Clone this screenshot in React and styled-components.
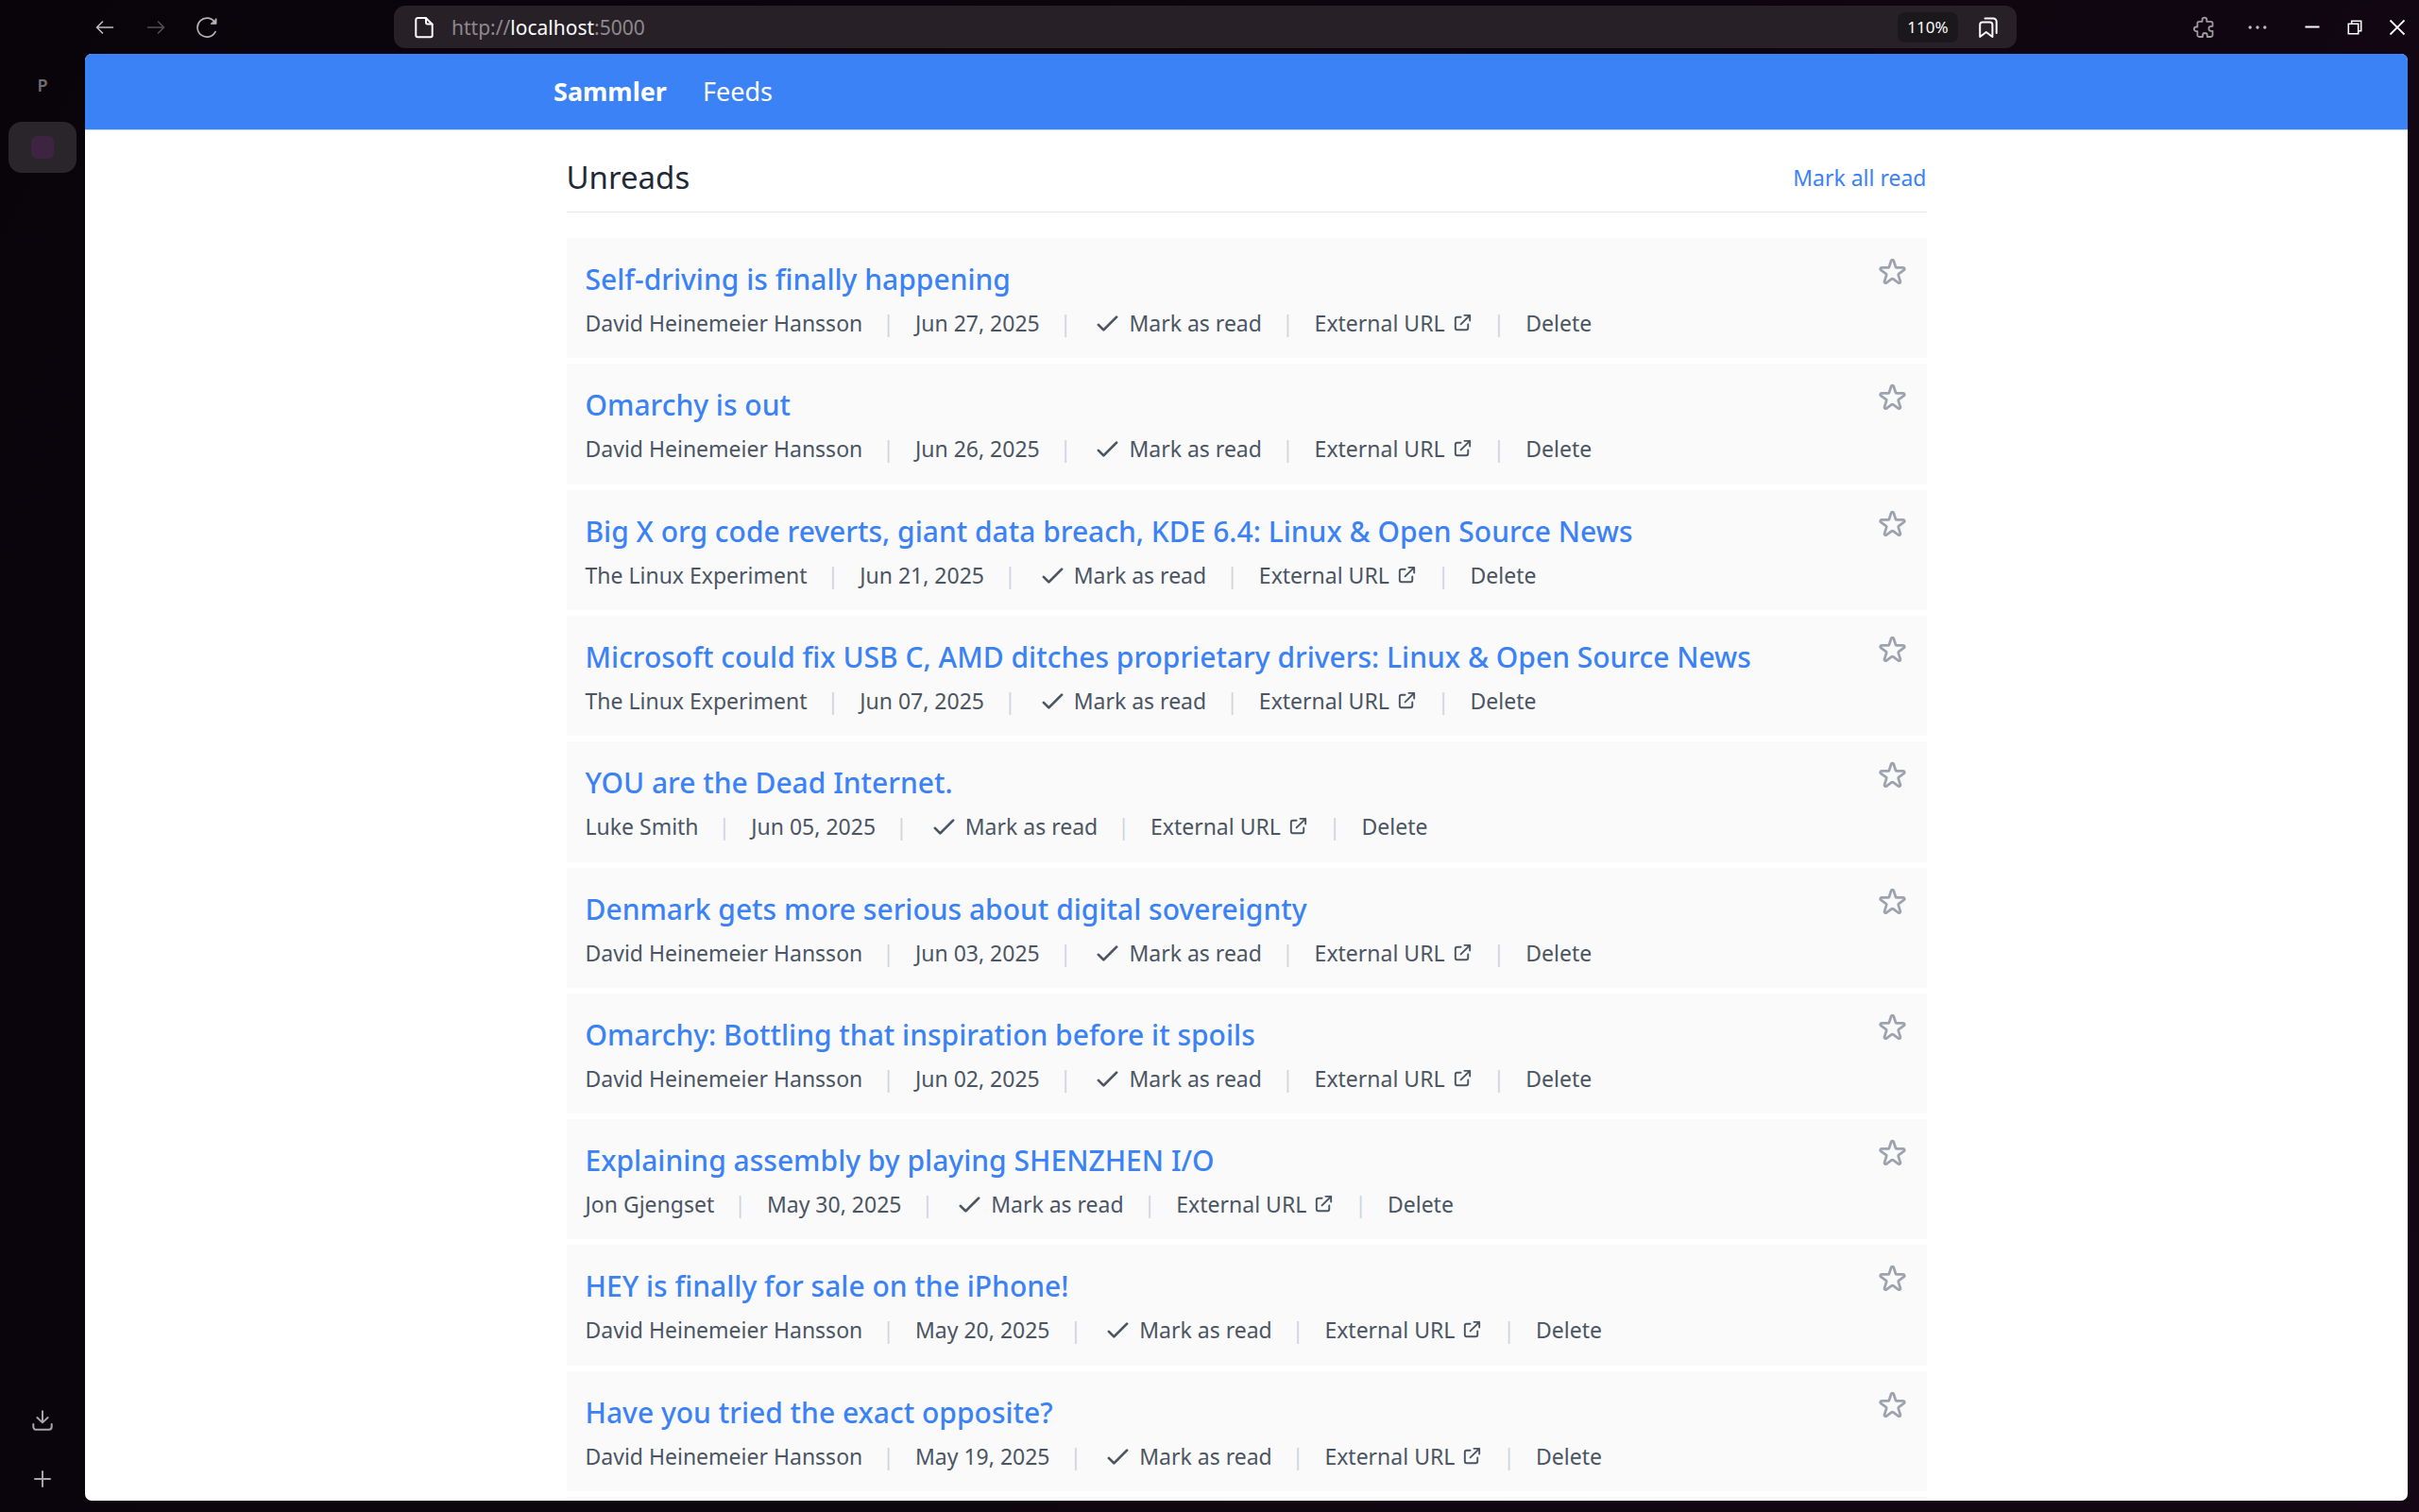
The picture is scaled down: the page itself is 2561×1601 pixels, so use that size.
import React from "react";
import styled, { createGlobalStyle } from "styled-components";

const GlobalStyle = createGlobalStyle`
  * { box-sizing: border-box; }
  body { margin: 0; background: #0c060d; font-family: "Noto Sans", sans-serif; }
  ul, h1, h2, p { margin: 0; padding: 0; list-style: none; font-weight: 400; }
  a { color: inherit; text-decoration: none; }
  button { background: none; border: 0; padding: 0; margin: 0; color: inherit; font: inherit; cursor: pointer; }
`;

const Window = styled.div`
  height: 100vh;
  display: grid;
  grid-template: 57px 1fr / 90px 1fr;
  overflow: hidden;
  background: linear-gradient(115deg, #08040a 0%, #0c060d 40%, #140614 100%);
`;

const Toolbar = styled.header`
  grid-column: 1 / -1;
  display: grid;
  grid-template-columns: 417px 1fr 426px;
  align-items: center;
  color: #fbfbfe;
`;

const IconButton = styled.button`
  display: flex;
  width: 24px;
  height: 24px;
  opacity: ${(p) => p.$opacity || 1};
  svg { width: 24px; height: 24px; }
`;

const NavButtons = styled.div`
  display: flex;
  gap: 30px;
  padding-left: 99px;
`;

const AddressBar = styled.div`
  display: flex;
  align-items: center;
  height: 45px;
  padding: 0 18px 0 20px;
  border-radius: 12px;
  background: #272127;
`;

const Address = styled.div`
  flex: 1;
  padding-left: 17px;
  font-size: 21px;
  line-height: 30px;
  color: #8d898d;
  b { font-weight: 400; color: #fbfbfe; }
`;

const ZoomLevel = styled.button`
  width: 64px;
  height: 32px;
  margin-right: 20px;
  border-radius: 8px;
  background: #1b181c;
  font-size: 17px;
`;

const WindowButtons = styled.div`
  display: flex;
  justify-content: flex-end;
  gap: 34px;
  padding-right: 11px;
`;

const ButtonGroup = styled.div`
  display: flex;
  gap: ${(p) => p.$gap}px;
`;

const Sidebar = styled.aside`
  display: flex;
  flex-direction: column;
  align-items: center;
  color: #fbfbfe;
`;

const Space = styled.div`
  height: 72px;
  padding-top: 21px;
  font-size: 18px;
  line-height: 24px;
  font-weight: 600;
  color: #716d71;
`;

const Tab = styled.button`
  width: 72px;
  height: 54px;
  display: grid;
  place-items: center;
  border-radius: 14px;
  background: #2a252b;
`;

const Favicon = styled.span`
  width: 24px;
  height: 24px;
  border-radius: 6px;
  background: #3d2440;
`;

const SideActions = styled.div`
  display: flex;
  flex-direction: column;
  gap: 38px;
  margin-top: auto;
  padding-bottom: 23px;
`;

const Viewport = styled.div`
  display: flex;
  flex-direction: column;
  min-height: 0;
  margin: 0 12px 12px 0;
  overflow: hidden;
  border-radius: 7px;
  background: #fff;
`;

const NavBar = styled.nav`
  flex: none;
  padding: 20px 0;
  border-bottom: 1px solid #bfdbfe;
  background: #3b82f6;
  color: #fff;
  font-size: 27px;
  line-height: 40px;
`;

const NavInner = styled.div`
  display: flex;
  gap: 38px;
  width: 100%;
  max-width: 1467px;
  margin: 0 auto;
`;

const Brand = styled.a`
  font-weight: 700;
`;

const Main = styled.main`
  flex: 1;
  display: flex;
  flex-direction: column;
  width: 100%;
  max-width: 1440px;
  min-height: 0;
  margin: 0 auto;
`;

const PageHead = styled.div`
  display: flex;
  align-items: center;
  justify-content: space-between;
  flex: none;
  padding: 25px 0 11px;
  margin-bottom: 27px;
  border-bottom: 1px solid #e5e7eb;
`;

const Heading = styled.h1`
  font-size: 33px;
  line-height: 50px;
  color: #1f2937;
`;

const MarkAll = styled.button`
  font-size: 23px;
  line-height: 33px;
  color: #3b82f6;
`;

const List = styled.ul`
  flex: 1;
  display: grid;
  grid-template-rows: repeat(10, 1fr) 4px;
  row-gap: 6px;
`;

const Row = styled.li`
  display: flex;
  justify-content: space-between;
  padding: 20px 20px 0;
  background: #fafafa;
  overflow: hidden;
`;

const NextRow = styled.li`
  background: #fafafa;
`;

const Title = styled.h2`
  font-size: 30px;
  line-height: 47px;
  font-weight: 500;
  color: #3b82f6;
`;

const Meta = styled.div`
  display: flex;
  align-items: center;
  margin-top: 7px;
  font-size: 23px;
  line-height: 33px;
  color: #4b5563;
`;

const Separator = styled.span`
  margin: 0 22px 0 21px;
  color: #d1d5db;
`;

const ReadButton = styled.button`
  display: flex;
  align-items: center;
  gap: 6px;
  svg { width: 33px; height: 33px; }
`;

const ExternalLink = styled.a`
  svg {
    width: 23px;
    height: 23px;
    margin-left: 7px;
    vertical-align: -2px;
  }
`;

const StarButton = styled.button`
  width: 33px;
  height: 33px;
  color: #9ca3af;
  svg { display: block; width: 33px; height: 33px; }
`;

const Icon = ({ children, width = 2, cap = "round" }) => (
  <svg viewBox="0 0 24 24" fill="none" stroke="currentColor" strokeWidth={width} strokeLinecap={cap} strokeLinejoin={cap === "round" ? "round" : "miter"} aria-hidden="true">
    {children}
  </svg>
);

const DHH = "David Heinemeier Hansson";
const entries = [
  ["Self-driving is finally happening", DHH, "Jun 27, 2025"],
  ["Omarchy is out", DHH, "Jun 26, 2025"],
  ["Big X org code reverts, giant data breach, KDE 6.4: Linux & Open Source News", "The Linux Experiment", "Jun 21, 2025"],
  ["Microsoft could fix USB C, AMD ditches proprietary drivers: Linux & Open Source News", "The Linux Experiment", "Jun 07, 2025"],
  ["YOU are the Dead Internet.", "Luke Smith", "Jun 05, 2025"],
  ["Denmark gets more serious about digital sovereignty", DHH, "Jun 03, 2025"],
  ["Omarchy: Bottling that inspiration before it spoils", DHH, "Jun 02, 2025"],
  ["Explaining assembly by playing SHENZHEN I/O", "Jon Gjengset", "May 30, 2025"],
  ["HEY is finally for sale on the iPhone!", DHH, "May 20, 2025"],
  ["Have you tried the exact opposite?", DHH, "May 19, 2025"],
];

function Entry({ title, feed, date }) {
  return (
    <Row>
      <div>
        <Title><a href="#entry">{title}</a></Title>
        <Meta>
          <a href="#feed">{feed}</a>
          <Separator>|</Separator>
          <span>{date}</span>
          <Separator>|</Separator>
          <ReadButton>
            <Icon><path d="M5 13l4 4L19 7" /></Icon>
            Mark as read
          </ReadButton>
          <Separator>|</Separator>
          <ExternalLink href="#external">
            External URL
            <Icon><path d="M10 6H6a2 2 0 0 0-2 2v10a2 2 0 0 0 2 2h10a2 2 0 0 0 2-2v-4M14 4h6m0 0v6m0-6L10 14" /></Icon>
          </ExternalLink>
          <Separator>|</Separator>
          <button>Delete</button>
        </Meta>
      </div>
      <StarButton aria-label="Star">
        <Icon><path d="M11.049 2.927c.3-.921 1.603-.921 1.902 0l1.519 4.674a1 1 0 0 0 .95.69h4.915c.969 0 1.371 1.24.588 1.81l-3.976 2.888a1 1 0 0 0-.363 1.118l1.518 4.674c.3.922-.755 1.688-1.538 1.118l-3.976-2.888a1 1 0 0 0-1.176 0l-3.976 2.888c-.783.57-1.838-.197-1.538-1.118l1.518-4.674a1 1 0 0 0-.363-1.118l-3.976-2.888c-.784-.57-.38-1.81.588-1.81h4.914a1 1 0 0 0 .951-.69l1.519-4.674z" /></Icon>
      </StarButton>
    </Row>
  );
}

export default function App() {
  return (
    <>
      <GlobalStyle />
      <Window>
        <Toolbar>
          <NavButtons>
            <IconButton aria-label="Back" $opacity={0.75}>
              <Icon width={1.6}><path d="M20.5 12H3.5M9.5 6l-6 6 6 6" /></Icon>
            </IconButton>
            <IconButton aria-label="Forward" $opacity={0.3}>
              <Icon width={1.6}><path d="M3.5 12h17M14.5 6l6 6-6 6" /></Icon>
            </IconButton>
            <IconButton aria-label="Reload" $opacity={0.7}>
              <Icon width={1.7}>
                <path d="M21 16.6A10 10 0 1 1 20.4 6.6" />
                <path d="M22 3v5.3h-5.5z" fill="currentColor" strokeWidth="1" />
              </Icon>
            </IconButton>
          </NavButtons>
          <AddressBar>
            <IconButton aria-label="Site information">
              <Icon>
                <path d="M5.5 2h8.3L20.7 8.8v11.7a1.7 1.7 0 0 1-1.7 1.7H5.2a1.9 1.9 0 0 1-1.9-1.9V4a2 2 0 0 1 2.2-2z" />
                <path d="M14 2.2v4.6a1.6 1.6 0 0 0 1.6 1.6h4.8" />
              </Icon>
            </IconButton>
            <Address role="textbox" aria-label="Address">http://<b>localhost</b>:5000</Address>
            <ZoomLevel>110%</ZoomLevel>
            <IconButton aria-label="Bookmarks">
              <Icon>
                <path d="M3.2 22V9a2.6 2.6 0 0 1 2.6-2.6h8A2.6 2.6 0 0 1 16.4 9v13l-6.6-5z" />
                <path d="M8.5 2.4h8.7a3.5 3.5 0 0 1 3.5 3.5v12" />
              </Icon>
            </IconButton>
          </AddressBar>
          <WindowButtons>
            <ButtonGroup $gap={33}>
              <IconButton aria-label="Extensions" $opacity={0.6}>
                <Icon width={1.8}><path d="M7.2 5.8h3.3V4a2.4 2.4 0 0 1 4.8 0v1.8h4.4a1.8 1.8 0 0 1 1.8 1.8v3.2h-1.6a2.5 2.5 0 0 0 0 5h1.6v4.4a1.8 1.8 0 0 1-1.8 1.8h-3.9v-1.6a2.4 2.4 0 0 0-4.8 0V22H7.2a1.8 1.8 0 0 1-1.8-1.8v-4.1H4.2a2.3 2.3 0 0 1 0-4.6h1.2V7.6a1.8 1.8 0 0 1 1.8-1.8z" /></Icon>
              </IconButton>
              <IconButton aria-label="Menu" $opacity={0.75}>
                <Icon width={3.4}><path d="M4.2 12h.01M12 12h.01M19.8 12h.01" /></Icon>
              </IconButton>
            </ButtonGroup>
            <ButtonGroup $gap={21}>
              <IconButton aria-label="Minimize"><Icon cap="butt"><path d="M4.5 11.5h15" /></Icon></IconButton>
              <IconButton aria-label="Restore">
                <Icon cap="butt" width={1.6}><path d="M5.3 8.3h10.4v10.4H5.3zM8.7 8V5.3h10V15.7H16" /></Icon>
              </IconButton>
              <IconButton aria-label="Close"><Icon cap="butt" width={1.8}><path d="m4.5 4.5 15 15M19.5 4.5l-15 15" /></Icon></IconButton>
            </ButtonGroup>
          </WindowButtons>
        </Toolbar>
        <Sidebar>
          <Space>P</Space>
          <Tab aria-label="Sammler"><Favicon /></Tab>
          <SideActions>
            <IconButton aria-label="Downloads" $opacity={0.65}>
              <Icon><path d="M12 2.2v12M6.4 9l5.6 5.4L17.6 9M2.3 16v2.8a3 3 0 0 0 3 3h13.4a3 3 0 0 0 3-3V16" /></Icon>
            </IconButton>
            <IconButton aria-label="New tab" $opacity={0.65}>
              <Icon><path d="M12 4v16M4 12h16" /></Icon>
            </IconButton>
          </SideActions>
        </Sidebar>
        <Viewport>
          <NavBar>
            <NavInner>
              <Brand href="#home">Sammler</Brand>
              <a href="#feeds">Feeds</a>
            </NavInner>
          </NavBar>
          <Main>
            <PageHead>
              <Heading>Unreads</Heading>
              <MarkAll>Mark all read</MarkAll>
            </PageHead>
            <List>
              {entries.map(([title, feed, date]) => (
                <Entry key={title} title={title} feed={feed} date={date} />
              ))}
              <NextRow />
            </List>
          </Main>
        </Viewport>
      </Window>
    </>
  );
}
